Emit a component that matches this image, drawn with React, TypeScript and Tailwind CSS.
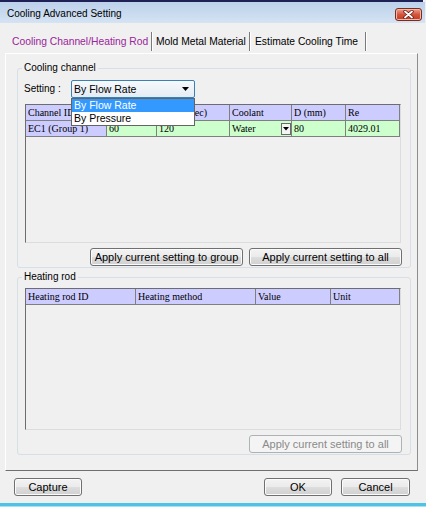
import React from "react";

const sans = "font-['Liberation_Sans',Arial,sans-serif]";
const serif = "font-['Liberation_Serif','Times_New_Roman',serif]";

const btn =
  "h-[18px] rounded-[3px] border border-[#707070] bg-[linear-gradient(to_bottom,#f3f3f3_0%,#ebebeb_48%,#dddddd_52%,#d0d0d0_100%)] shadow-[inset_0_0_0_1px_#fbfbfb] text-[11px] leading-[16px] text-black flex items-center justify-center";

function Cell({
  w,
  bg,
  children,
  className = "",
}: {
  w: number;
  bg: string;
  children?: React.ReactNode;
  className?: string;
}) {
  return (
    <div
      className={`h-[16px] border-r border-b border-[#7f7f7f] pl-[2px] text-[10px] leading-[15px] whitespace-nowrap overflow-hidden ${bg} ${className}`}
      style={{ width: w }}
    >
      {children}
    </div>
  );
}

function CloseButton() {
  return (
    <div className="mt-[6px] w-[27px] h-[13px] rounded-[3px] border border-[#7d2a1c] bg-linear-to-b from-[#e9a08f] via-[#d4553e] to-[#c2391f] flex items-center justify-center shadow-[inset_0_0_0_1px_#f2b9aa]">
      <svg width="11" height="9" viewBox="0 0 11 9">
        <path d="M2 1.5 L9 7.5 M9 1.5 L2 7.5" stroke="#6b1a10" strokeWidth="3.4" strokeLinecap="round" />
        <path d="M2 1.5 L9 7.5 M9 1.5 L2 7.5" stroke="#ffffff" strokeWidth="1.8" strokeLinecap="round" />
      </svg>
    </div>
  );
}

function Tabs() {
  return (
    <div className="h-[30px] pt-[9px] flex items-start text-[10.3px] leading-[12px]">
      <div className="w-[146px] h-[19px] flex items-center pl-[7px] text-[#9a249a] whitespace-nowrap">
        Cooling Channel/Heating Rod
      </div>
      <div className="w-[2px] h-[19px] border-l border-[#7a7a7a] border-r border-r-white" />
      <div className="w-[96px] h-[19px] flex items-center pl-[3px] whitespace-nowrap">
        Mold Metal Material
      </div>
      <div className="w-[2px] h-[19px] border-l border-[#7a7a7a] border-r border-r-white" />
      <div className="w-[114px] h-[19px] flex items-center pl-[4px] whitespace-nowrap">
        Estimate Cooling Time
      </div>
      <div className="w-[2px] h-[19px] border-l border-[#7a7a7a] border-r border-r-white" />
    </div>
  );
}

function CoolingTable() {
  const hdr = "bg-[#ccccff]";
  const grn = "bg-[#ccffcc]";
  return (
    <div className={`ml-[1px] w-[376px] h-[139px] border-l border-t border-l-[#6d6d6d] border-t-[#6d6d6d] border-r border-b border-r-[#dcdcdc] border-b-[#dcdcdc] ${serif}`}>
      <div className="flex">
        <Cell w={81} bg={hdr}>Channel ID</Cell>
        <Cell w={50} bg={hdr}>Temp (°C)</Cell>
        <Cell w={73} bg={hdr}>Period (sec)</Cell>
        <Cell w={62} bg={hdr}>Coolant</Cell>
        <Cell w={54} bg={hdr}>D (mm)</Cell>
        <Cell w={54} bg={hdr}>Re</Cell>
      </div>
      <div className="flex">
        <Cell w={81} bg={hdr}>EC1 (Group 1)</Cell>
        <Cell w={50} bg={grn}>60</Cell>
        <Cell w={73} bg={grn}>120</Cell>
        <Cell w={62} bg={grn} className="flex items-center justify-between pr-[0px]">
          <span>Water</span>
          <span className="w-[10px] h-[12px] border border-[#6a6a6a] bg-[#f4f4f4] flex items-center justify-center">
            <svg width="6" height="4" viewBox="0 0 6 4">
              <path d="M0 0 L6 0 L3 3.5 Z" fill="#000" />
            </svg>
          </span>
        </Cell>
        <Cell w={54} bg={grn}>80</Cell>
        <Cell w={54} bg={grn}>4029.01</Cell>
      </div>
    </div>
  );
}

function HeatingTable() {
  const hdr = "bg-[#ccccff]";
  return (
    <div className={`ml-[1px] w-[376px] h-[142px] border-l border-t border-l-[#6d6d6d] border-t-[#6d6d6d] border-r border-b border-r-[#dcdcdc] border-b-[#dcdcdc] ${serif}`}>
      <div className="flex">
        <Cell w={110} bg={hdr}>Heating rod ID</Cell>
        <Cell w={120} bg={hdr}>Heating method</Cell>
        <Cell w={75} bg={hdr}>Value</Cell>
        <Cell w={69} bg={hdr}>Unit</Cell>
      </div>
    </div>
  );
}

export default function App() {
  return (
    <div className={`w-[426px] h-[507px] bg-[#f0f0f0] flex flex-col overflow-hidden text-black ${sans}`}>
      <div className="h-[2px] mr-[3px] bg-[#1f2156]" />
      <div className="h-[21px] mr-[1px] flex items-start justify-between bg-linear-to-b from-[#bcd1eb] to-[#d5e3f3] pl-[7px] pr-[3px]">
        <span className="mt-[6px] text-[10px] leading-[12px]">Cooling Advanced Setting</span>
        <CloseButton />
      </div>

      <div className="pl-[5px] pr-[8px]">
        <Tabs />
        <div className="h-[418px] border border-t-white border-l-white border-r-[#8d8d8d] border-b-[#6f6f6f] pl-[11px] pt-[8px]">
          <fieldset className="w-[394px] min-w-0 border border-[#d5dfe5] rounded-[3px]">
            <legend className="ml-[4px] px-[2px] text-[10px] leading-[12px]">Cooling channel</legend>
            <div className="pl-[6px] pr-[8px] pt-[6px] pb-[1px] flex flex-col">
              <div className="h-[18px] flex items-center">
                <span className="w-[47px] text-[10px] leading-[12px]">Setting :</span>
                <div className="relative w-[124px] h-[18px]">
                  <div className="w-full h-full border border-[#3c7fb1] rounded-[2px] bg-linear-to-b from-[#f6f9fc] to-[#e4ecf4] flex items-center justify-between pl-[2px] pr-[5px] text-[10.5px] leading-[12px]">
                    <span>By Flow Rate</span>
                    <svg width="7" height="4" viewBox="0 0 7 4">
                      <path d="M0 0 L7 0 L3.5 4 Z" fill="#000" />
                    </svg>
                  </div>
                  <div className="absolute left-0 top-full z-10 w-[124px] border border-[#646464] bg-white text-[10.5px] leading-[13px]">
                    <div className="h-[13px] bg-[#3399ff] text-white pl-[2px]">By Flow Rate</div>
                    <div className="h-[13px] pl-[2px]">By Pressure</div>
                  </div>
                </div>
              </div>
              <div className="mt-[6px]">
                <CoolingTable />
              </div>
              <div className="mt-[5px] flex justify-end gap-[6px]">
                <div className={`w-[153px] ${btn}`}>Apply current setting to group</div>
                <div className={`w-[153px] ${btn}`}>Apply current setting to all</div>
              </div>
            </div>
          </fieldset>

          <fieldset className="mt-[3px] w-[394px] min-w-0 border border-[#d5dfe5] rounded-[3px]">
            <legend className="ml-[4px] px-[2px] text-[10px] leading-[12px]">Heating rod</legend>
            <div className="pl-[6px] pr-[8px] pt-[5px] pb-[1px] flex flex-col">
              <HeatingTable />
              <div className="mt-[5px] flex justify-end">
                <div className="w-[153px] h-[18px] rounded-[3px] border border-[#adb2b5] bg-[#f4f4f4] text-[11px] leading-[16px] text-[#8a8a8a] flex items-center justify-center">
                  Apply current setting to all
                </div>
              </div>
            </div>
          </fieldset>
        </div>
      </div>

      <div className="h-[32px] pt-[7px] pl-[14px] pr-[16px] flex justify-between">
        <div className={`w-[68px] ${btn}`}>Capture</div>
        <div className="flex gap-[9px]">
          <div className={`w-[68px] ${btn} border-[#3c7fb1] shadow-[inset_0_0_0_1px_#bfe3f7]`}>OK</div>
          <div className={`w-[69px] ${btn}`}>Cancel</div>
        </div>
      </div>
      <div className="h-[3px] bg-[#4fc3e6]" />
      <div className="h-[1px] bg-[#a9e2f2]" />
    </div>
  );
}
